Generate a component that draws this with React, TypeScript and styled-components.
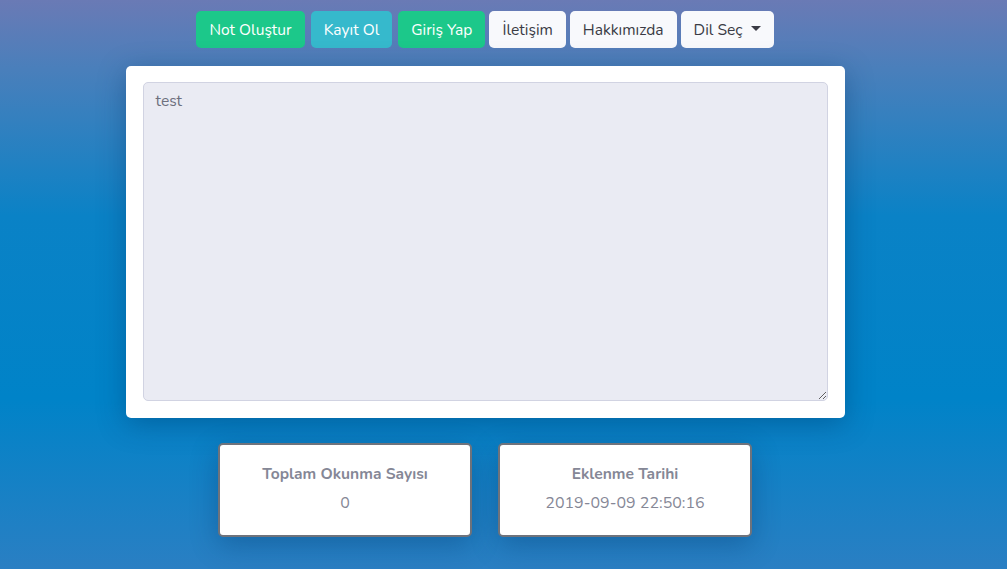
import styled, { createGlobalStyle } from 'styled-components';

const GlobalStyle = createGlobalStyle`
    html, body {
        margin: 0;
        padding: 0;
        height: 100%;
    }
    body {
        font-family: "Nunito", "Open Sans", "Noto Sans", sans-serif;
        background: linear-gradient(180deg, #6a7ab5 0%, #4a7fbb 12%, #0a82c6 38%, #0083c8 70%, #2a7fc3 100%);
        min-height: 569px;
    }
`

const Page = styled.div`
    min-height: 569px;
    padding: 11px 37px 0 0;
    display: flex;
    flex-direction: column;
    align-items: center;
    box-sizing: border-box;
`

const Nav = styled.nav`
    display: flex;
    gap: 4px;
`

const NavButton = styled.button<{ $bg: string, $fg: string, $mr?: number }>`
    height: 37px;
    padding: 0 13px;
    border: none;
    border-radius: 5px;
    background-color: ${props => props.$bg};
    color: ${props => props.$fg};
    font-family: inherit;
    font-size: 15.6px;
    display: flex;
    align-items: center;
    gap: 8px;
    margin-right: ${props => props.$mr ?? 0}px;
    cursor: pointer;
`

const Caret = styled.span`
    width: 0;
    height: 0;
    border-left: 5px solid transparent;
    border-right: 5px solid transparent;
    border-top: 5px solid #3a3b45;
    margin-top: -2px;
`

const Card = styled.div`
    margin-top: 18px;
    width: 719px;
    height: 352px;
    background: #fff;
    border-radius: 5px;
    padding: 16px 17px 17px;
    box-sizing: border-box;
    box-shadow: 0 6px 28px rgba(0, 40, 90, 0.35);
`

const Note = styled.textarea`
    width: 100%;
    height: 100%;
    box-sizing: border-box;
    background: #eaebf3;
    border: 1px solid #d1d3e2;
    border-radius: 5px;
    padding: 7px 12px;
    color: #6e707e;
    font-family: inherit;
    font-size: 15.6px;
    resize: vertical;
    outline: none;
`

const Stats = styled.div`
    margin-top: 25px;
    display: flex;
    gap: 26px;
`

const StatBox = styled.div`
    width: 254px;
    height: 94px;
    box-sizing: border-box;
    background: #fff;
    border: 2px solid #6f737c;
    border-radius: 5px;
    padding-bottom: 3px;
    display: flex;
    flex-direction: column;
    align-items: center;
    justify-content: center;
    gap: 7px;
    box-shadow: 0 8px 28px rgba(0, 40, 90, 0.3);
    color: #858796;
`

const StatTitle = styled.div`
    font-weight: 700;
    font-size: 15.6px;
`

const StatValue = styled.div`
    font-size: 16px;
`

const buttons = [
    { label: 'Not Oluştur', bg: '#1cc88a', fg: '#fff', mr: 2 },
    { label: 'Kayıt Ol', bg: '#36b9cc', fg: '#fff', mr: 2 },
    { label: 'Giriş Yap', bg: '#1cc88a', fg: '#fff' },
    { label: 'İletişim', bg: '#f8f9fc', fg: '#3a3b45' },
    { label: 'Hakkımızda', bg: '#f8f9fc', fg: '#3a3b45' },
]

export default function App(){
    return(
        <>
            <GlobalStyle />
            <Page>
                <Nav>
                    {buttons.map((b) => (
                        <NavButton key={b.label} $bg={b.bg} $fg={b.fg} $mr={b.mr}>{b.label}</NavButton>
                    ))}
                    <NavButton $bg="#f8f9fc" $fg="#3a3b45">Dil Seç <Caret /></NavButton>
                </Nav>
                <Card>
                    <Note defaultValue="test" />
                </Card>
                <Stats>
                    <StatBox>
                        <StatTitle>Toplam Okunma Sayısı</StatTitle>
                        <StatValue>0</StatValue>
                    </StatBox>
                    <StatBox>
                        <StatTitle>Eklenme Tarihi</StatTitle>
                        <StatValue>2019-09-09 22:50:16</StatValue>
                    </StatBox>
                </Stats>
            </Page>
        </>
    )
}
